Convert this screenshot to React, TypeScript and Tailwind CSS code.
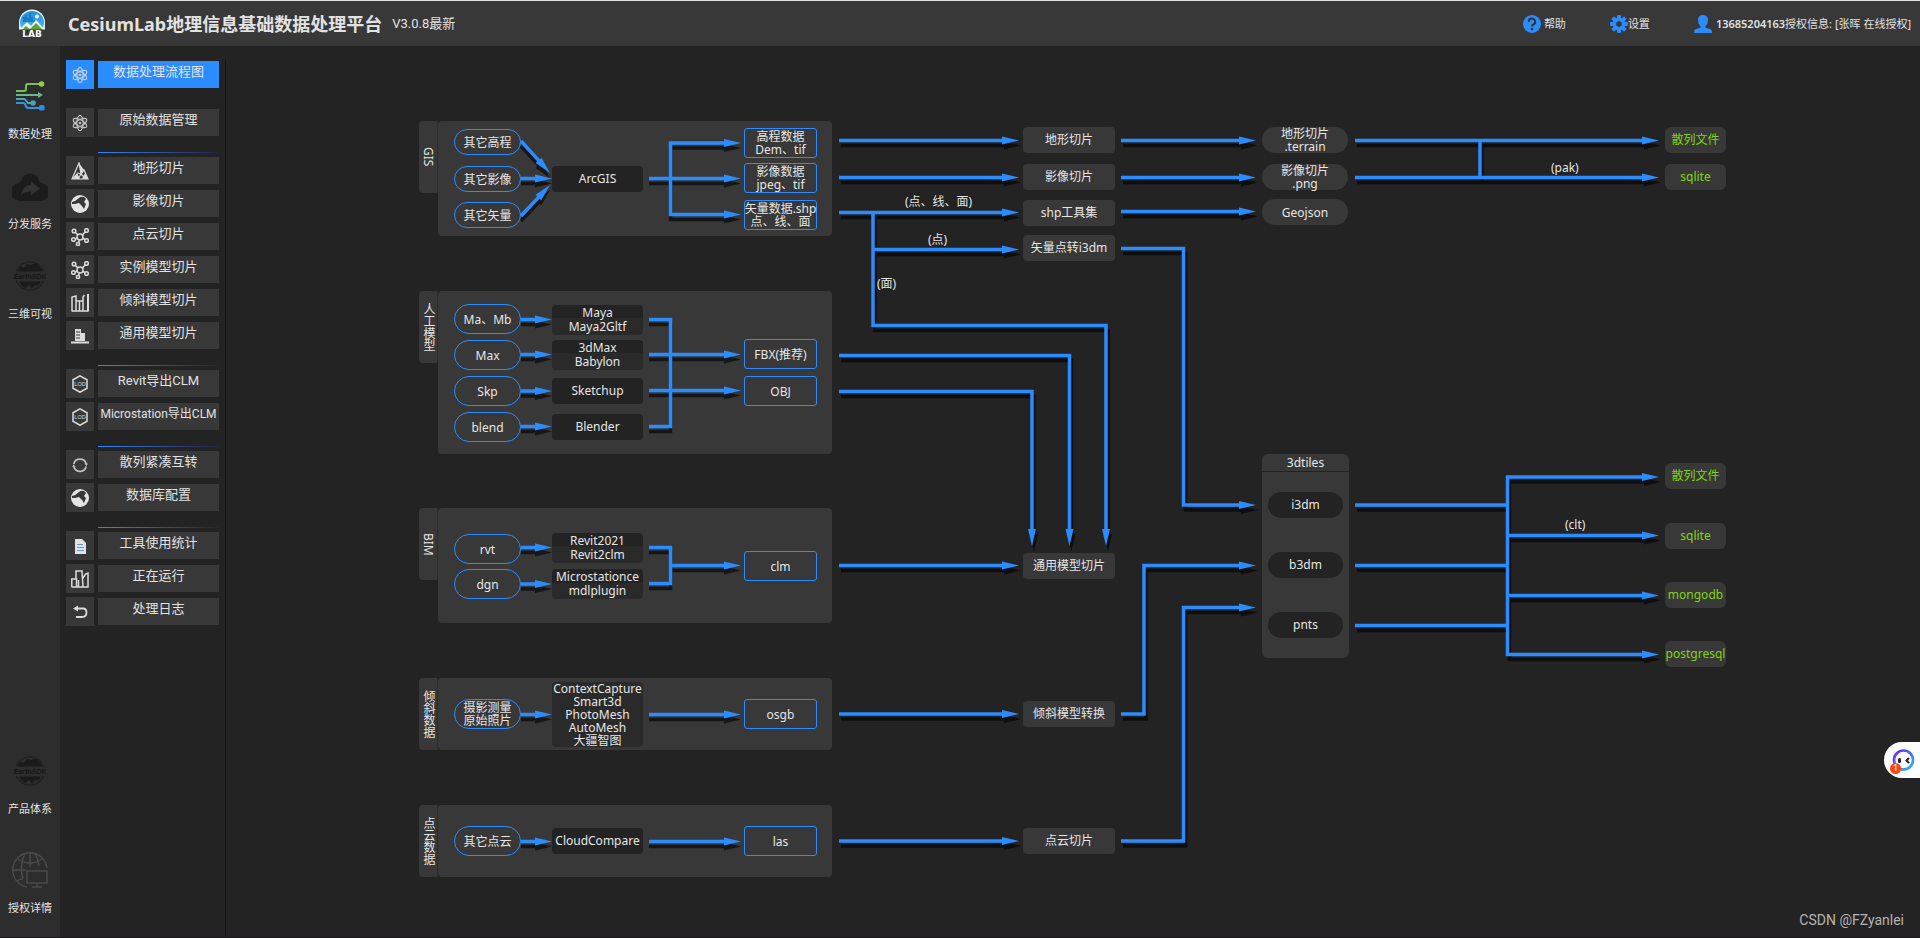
import type { ReactNode } from "react";

/* ---------- Icons ---------- */

function LogoIcon() {
  return (
    <svg viewBox="0 0 28 30" className="h-[30px] w-7" aria-hidden="true">
      <defs>
        <linearGradient id="sky" x1="0" y1="0" x2="0" y2="1">
          <stop offset="0" stopColor="#1f8fe0" />
          <stop offset="1" stopColor="#5cc4f2" />
        </linearGradient>
        <clipPath id="disc">
          <path d="M1 14A13 13 0 0 1 27 14V21H1Z" />
        </clipPath>
      </defs>
      <path d="M1 21V13.500A13 13 0 0 1 27 13.500V21Z" fill="#e9f4f8" />
      <circle cx="14" cy="14" r="12" fill="url(#sky)" clipPath="url(#disc)" />
      <path d="M5 12V8H7V6H9V9H11V4H13V8H15V11H17V13H5Z" fill="#1673b8" opacity=".8" />
      <circle cx="19" cy="7.500" r="2" fill="#fff" />
      <g clipPath="url(#disc)">
        <path d="M1 21L9 13L13 17L18 11L27 21Z" fill="#f4f9f2" />
        <path d="M2 23L8 17L12 20L18 14L27 23Z" fill="#5da336" />
      </g>
      <path d="M1 20.500H27V30H1Z" fill="#383838" />
      <text x="14" y="27.500" textAnchor="middle" fontSize="9" fontWeight="800" fontFamily="DejaVu Sans, sans-serif" fill="#fff">
        LAB
      </text>
    </svg>
  );
}

function FlowIcon() {
  return (
    <svg viewBox="0 0 30 32" className="h-8 w-[30px]" fill="none" strokeWidth="2" aria-hidden="true">
      <path d="M1 11H9Q11 11 11 9V6Q11 4 13 4H24" stroke="#79bf5c" />
      <circle cx="26.500" cy="4" r="2.800" fill="#8ed13e" />
      <path d="M1 15H24" stroke="#66b98a" />
      <path d="M23 12L28 15L23 18Z" fill="#66b98a" />
      <path d="M1 19H9Q10 19 11 20.500L13 23H16" stroke="#4aa5b5" />
      <path d="M1 23H8Q10 23 10.500 25Q11 28 14 28H25" stroke="#3a93d8" />
      <circle cx="18" cy="23" r="2.800" fill="#45a2c0" />
      <rect x="24" y="25" width="5.500" height="5.500" rx="1.500" fill="#2b8cf0" />
    </svg>
  );
}

function CloudShareIcon() {
  return (
    <svg viewBox="0 1 36 32" className="h-8 w-9" aria-hidden="true">
      <path d="M9 32A9 9 0 0 1 7 14Q8 13 9.500 11.500A9 9 0 0 1 27 11.500Q28 13 29 14A9 9 0 0 1 27 32Z" fill="#1b1b1b" />
      <path d="M9 26Q11 16 19 16V12.500L28 19.500L19 26.500V22.500Q13 22 9 26Z" fill="#333" />
    </svg>
  );
}

function EarthSdkIcon() {
  return (
    <svg viewBox="0 0 36 32" className="h-8 w-9" aria-hidden="true">
      <path d="M4.500 11A14.500 14.500 0 0 1 31.500 11M4.500 21A14.500 14.500 0 0 0 31.500 21" fill="none" stroke="#202020" strokeWidth="1.300" />
      <path d="M6 11L8 6.500L12 8L15 4L19 5L24 3L27 6L30 10V11.500H6Z" fill="#1a1a1a" />
      <path d="M7 21.500H29L26 25.500L23 25L20 29L17 25L13 28L9 25Z" fill="#1a1a1a" />
      <text x="18" y="19" textAnchor="middle" fontSize="7" fontWeight="700" fontStyle="italic" fontFamily="Liberation Sans, sans-serif" fill="#161616">
        EarthSDK
      </text>
    </svg>
  );
}

function GlobeMonitorIcon() {
  return (
    <svg viewBox="0 0 36 36" className="size-9" fill="none" stroke="#4a4a4a" strokeWidth="1.500" aria-hidden="true">
      <path d="M15 35A17.200 17.200 0 1 1 35 16" />
      <path d="M18 1V15M1 18H14M6 7Q18 15 30 7M13 1.500Q7 14 11 27M23 1.500Q26 7 27 14M5 29Q8 27 11 27" />
      <rect x="15" y="19" width="20" height="12" />
      <path d="M25 31V35M20 35H30" />
    </svg>
  );
}

function Tile({ children }: { children: ReactNode }) {
  return (
    <svg viewBox="0 0 18 18" className="size-[18px]" fill="none" stroke="#dcdcdc" strokeWidth="1.200" aria-hidden="true">
      {children}
    </svg>
  );
}

const icons = {
  atom: (
    <Tile>
      <g opacity=".85">
        <ellipse cx="9" cy="9" rx="3.200" ry="7.600" />
        <ellipse cx="9" cy="9" rx="3.200" ry="7.600" transform="rotate(60 9 9)" />
        <ellipse cx="9" cy="9" rx="3.200" ry="7.600" transform="rotate(-60 9 9)" />
        <circle cx="9" cy="9" r="1.300" fill="#dcdcdc" stroke="none" />
      </g>
    </Tile>
  ),
  terrain: (
    <Tile>
      <path d="M8 1L1 17H17L13 8L10 12Z" />
      <path d="M8 1L10 12L13 8ZM1 17L6 11L9 17ZM11 17L14 11L17 17Z" fill="#dcdcdc" stroke="none" />
      <path d="M6 11L10 12L7 17M10 12L14 16" />
    </Tile>
  ),
  globe: (
    <Tile>
      <circle cx="9" cy="9" r="9" fill="#e4e4e4" stroke="none" />
      <path d="M1 7Q5 6 8 3Q10 1 13 2L15 4L13 7L15 9L13 14L11 11L8 8L4 9L1 9Z" fill="#383838" stroke="none" />
    </Tile>
  ),
  cluster: (
    <Tile>
      <g strokeWidth="1.500">
        <circle cx="9" cy="9" r="3" />
        <circle cx="3" cy="3" r="1.800" />
        <circle cx="15.500" cy="2.500" r="1.800" />
        <circle cx="2.500" cy="11.500" r="1.800" />
        <circle cx="15.500" cy="12.500" r="1.800" />
        <circle cx="7" cy="16" r="1.600" />
        <path d="M4.500 4.500L7 7M14 4L11.500 7M4.300 11L6.500 10M11.700 10.500L14 11.500M8.500 12L7.500 14.500" />
      </g>
    </Tile>
  ),
  buildings: (
    <Tile>
      <g strokeWidth="1.500">
        <path d="M1 17V3L5 2V17M5 7H12V17M8.500 7V17M12 7V3L13.500 1M.5 17H17" />
        <path d="M17 0V17.500" strokeWidth="2" />
      </g>
    </Tile>
  ),
  tower: (
    <Tile>
      <path d="M4 2H10V6H14V14H4Z" fill="#dcdcdc" stroke="none" />
      <path d="M5 5H9M5 8H9M5 11H9" stroke="#383838" />
      <path d="M0 15.500H18" strokeWidth="2" />
    </Tile>
  ),
  lod: (
    <Tile>
      <path d="M9 .8L16 4.800V13.200L9 17.200L2 13.200V4.800Z" strokeWidth="1.500" />
      <text x="9" y="11" textAnchor="middle" fontSize="5.500" fontFamily="Liberation Sans, sans-serif" fill="#dcdcdc" stroke="none">
        LOD
      </text>
    </Tile>
  ),
  cycle: (
    <Tile>
      <path d="M2.800 8A6.400 6.400 0 0 1 15.200 8M15.200 10.500A6.400 6.400 0 0 1 2.800 10.500" strokeWidth="1.800" stroke="#bdbdbd" />
      <path d="M13.200 7.500H17L15.500 10ZM1 10.800L2.500 8.500L4.800 10.800Z" fill="#bdbdbd" stroke="none" />
    </Tile>
  ),
  doc: (
    <Tile>
      <path d="M4 2H11L15 6V17H4Z" fill="#e4e4e4" stroke="none" />
      <path d="M6 7.500H12M6 10.500H13M6 13.500H13" stroke="#5b9bea" />
    </Tile>
  ),
  city: (
    <Tile>
      <path d="M.8 17V9H5.500V17M5 9V1H11L12 17M12 8L14.500 4L17 3V17H.5M7.500 10V17" strokeWidth="1.500" />
    </Tile>
  ),
  back: (
    <Tile>
      <path d="M6 5.500H12Q15.500 5.500 15.500 9.500Q15.500 14 11 14H5" strokeWidth="1.800" />
      <path d="M7 2.500V8.500L2 5.500Z" fill="#dcdcdc" stroke="none" />
    </Tile>
  ),
};

function HelpIcon() {
  return (
    <svg viewBox="0 0 18 18" className="size-[18px]" aria-hidden="true">
      <circle cx="9" cy="9" r="9" fill="#2a8cff" />
      <path d="M5.800 7A3.200 3.200 0 1 1 10.500 9.500Q9 10.200 9 11.500" fill="none" stroke="#333" strokeWidth="2" />
      <circle cx="9" cy="14" r="1.300" fill="#333" />
    </svg>
  );
}

const teeth = [0, 45, 90, 135, 180, 225, 270, 315];

function GearIcon() {
  return (
    <svg viewBox="0 0 18 18" className="size-[18px]" aria-hidden="true">
      <circle cx="9" cy="9" r="4.600" fill="none" stroke="#2a8cff" strokeWidth="3.600" />
      {teeth.map((a) => (
        <rect key={a} x="7" y="0" width="4" height="4" rx=".8" fill="#2a8cff" transform={`rotate(${a} 9 9)`} />
      ))}
    </svg>
  );
}

function UserIcon() {
  return (
    <svg viewBox="0 0 18 18" className="size-[18px]" fill="#2a8cff" aria-hidden="true">
      <path d="M9 0Q14 0 14 5Q14 9 11.500 11V12.500L17 14.500Q18 15 18 18H0Q0 15 1 14.500L6.500 12.500V11Q4 9 4 5Q4 0 9 0Z" />
    </svg>
  );
}

/* ---------- Navigation ---------- */

function RailItem({ icon, label }: { icon: ReactNode; label: string }) {
  return (
    <a href="#" className="flex w-full flex-col items-center gap-[13px]">
      <span className="flex h-9 items-center justify-center">{icon}</span>
      <span className="text-[11px] leading-4 text-[#e4e4e4]">{label}</span>
    </a>
  );
}

type MenuEntry = { icon: keyof typeof icons; label: string; active?: boolean; long?: boolean };

const menu: { line: boolean; items: MenuEntry[] }[] = [
  { line: false, items: [{ icon: "atom", label: "数据处理流程图", active: true }] },
  { line: false, items: [{ icon: "atom", label: "原始数据管理" }] },
  {
    line: true,
    items: [
      { icon: "terrain", label: "地形切片" },
      { icon: "globe", label: "影像切片" },
      { icon: "cluster", label: "点云切片" },
      { icon: "cluster", label: "实例模型切片" },
      { icon: "buildings", label: "倾斜模型切片" },
      { icon: "tower", label: "通用模型切片" },
    ],
  },
  {
    line: true,
    items: [
      { icon: "lod", label: "Revit导出CLM" },
      { icon: "lod", label: "Microstation导出CLM", long: true },
    ],
  },
  {
    line: true,
    items: [
      { icon: "cycle", label: "散列紧凑互转" },
      { icon: "globe", label: "数据库配置" },
    ],
  },
  {
    line: true,
    items: [
      { icon: "doc", label: "工具使用统计" },
      { icon: "city", label: "正在运行" },
      { icon: "back", label: "处理日志" },
    ],
  },
];

function MenuButton({ icon, label, active, long }: MenuEntry) {
  const bg = active ? "bg-[#2a8cff]" : "bg-[#383838]";
  const size = long ? "text-[12px]" : "text-[13px]";
  return (
    <button type="button" className="flex h-[29px] w-full items-center gap-1">
      <span className={`flex h-full w-7 shrink-0 items-center justify-center ${bg}`}>{icons[icon]}</span>
      <span
        className={`flex h-[27px] min-w-0 flex-1 items-center justify-center pb-[6px] leading-4 whitespace-nowrap text-[#e2e2e2] ${size} ${bg}`}
      >
        {label}
      </span>
    </button>
  );
}

function Sidebar() {
  return (
    <nav className="flex w-[166px] shrink-0 flex-col pt-[14px] pb-px">
      <div className="flex flex-1 flex-col border-r border-[#151515] pr-[6px] pl-[6px]">
        {menu.map((group, i) => (
          <div key={i}>
            {i > 0 && (
              <div className="flex h-[19px] flex-col justify-end pb-[3px] pl-8">
                {group.line && <div className="h-px bg-gradient-to-r from-[#2a8cff] to-[#232343]" />}
              </div>
            )}
            <div className="flex flex-col gap-1">
              {group.items.map((item) => (
                <MenuButton key={item.label} {...item} />
              ))}
            </div>
          </div>
        ))}
      </div>
    </nav>
  );
}

/* ---------- Diagram ---------- */

/* The canvas shares the window's coordinate system; it starts right of the menus and under the header. */
const ORIGIN_X = 226;
const ORIGIN_Y = 46;
const CANVAS_W = 1510;
const CANVAS_H = 850;

const kinds = {
  pill: "rounded-full border border-[#2a8cff] leading-[13px]",
  tool: "rounded bg-[#232323] leading-[14px]",
  split: "rounded bg-gradient-to-b from-[#232323] from-45% to-[#2a2a2a] to-45% leading-[14px]",
  list: "rounded-sm bg-[#2a2a2a] leading-[13px]",
  output: "rounded-[3px] border border-[#2a8cff] leading-[13px]",
  step: "rounded bg-[#383838] leading-4",
  format: "rounded-full bg-[#383838] leading-[13px]",
  tile: "rounded-full bg-[#232323] leading-4",
  sink: "rounded-md bg-[#383838] leading-4 text-[#7fd60e]",
};

const widths: Record<keyof typeof kinds, { x: number; w: number }> = {
  pill: { x: 454, w: 67 },
  tool: { x: 552, w: 91 },
  split: { x: 552, w: 91 },
  list: { x: 552, w: 91 },
  output: { x: 744, w: 73 },
  step: { x: 1023, w: 92 },
  format: { x: 1262, w: 86 },
  tile: { x: 1268, w: 75 },
  sink: { x: 1665, w: 61 },
};

type NodeDef = [keyof typeof kinds, number, number, string[]];

const nodes: NodeDef[] = [
  ["pill", 129, 26, ["其它高程"]],
  ["pill", 166, 26, ["其它影像"]],
  ["pill", 202, 26, ["其它矢量"]],
  ["tool", 166, 26, ["ArcGIS"]],
  ["output", 128, 30, ["高程数据", "Dem、tif"]],
  ["output", 163, 30, ["影像数据", "jpeg、tif"]],
  ["output", 200, 30, ["矢量数据.shp", "点、线、面"]],

  ["pill", 304, 30, ["Ma、Mb"]],
  ["pill", 340, 30, ["Max"]],
  ["pill", 376, 30, ["Skp"]],
  ["pill", 412, 30, ["blend"]],
  ["split", 305, 30, ["Maya", "Maya2Gltf"]],
  ["split", 340, 30, ["3dMax", "Babylon"]],
  ["tool", 378, 26, ["Sketchup"]],
  ["tool", 414, 26, ["Blender"]],
  ["output", 339, 30, ["FBX(推荐)"]],
  ["output", 376, 30, ["OBJ"]],

  ["pill", 534, 30, ["rvt"]],
  ["pill", 569, 30, ["dgn"]],
  ["split", 533, 30, ["Revit2021", "Revit2clm"]],
  ["split", 569, 30, ["Microstationce", "mdlplugin"]],
  ["output", 551, 30, ["clm"]],

  ["pill", 699, 30, ["摄影测量", "原始照片"]],
  ["list", 682, 65, ["ContextCapture", "Smart3d", "PhotoMesh", "AutoMesh", "大疆智图"]],
  ["output", 699, 30, ["osgb"]],

  ["pill", 826, 30, ["其它点云"]],
  ["tool", 828, 26, ["CloudCompare"]],
  ["output", 826, 30, ["las"]],

  ["step", 127, 26, ["地形切片"]],
  ["step", 164, 26, ["影像切片"]],
  ["step", 200, 26, ["shp工具集"]],
  ["step", 235, 26, ["矢量点转i3dm"]],
  ["step", 553, 26, ["通用模型切片"]],
  ["step", 701, 26, ["倾斜模型转换"]],
  ["step", 828, 26, ["点云切片"]],

  ["format", 127, 26, ["地形切片", ".terrain"]],
  ["format", 164, 26, ["影像切片", ".png"]],
  ["format", 199, 26, ["Geojson"]],

  ["tile", 492, 26, ["i3dm"]],
  ["tile", 552, 26, ["b3dm"]],
  ["tile", 612, 26, ["pnts"]],

  ["sink", 127, 26, ["散列文件"]],
  ["sink", 164, 26, ["sqlite"]],
  ["sink", 463, 26, ["散列文件"]],
  ["sink", 523, 26, ["sqlite"]],
  ["sink", 582, 26, ["mongodb"]],
  ["sink", 641, 26, ["postgresql"]],
];

const groups = [
  { title: "GIS", y: 121, h: 115 },
  { title: "人工模型", y: 291, h: 163 },
  { title: "BIM", y: 508, h: 115 },
  { title: "倾斜数据", y: 678, h: 72 },
  { title: "点云数据", y: 805, h: 72 },
];

const notes = [
  { text: "(点、线、面)", x: 905, y: 194 },
  { text: "(点)", x: 928, y: 232 },
  { text: "(面)", x: 877, y: 276 },
  { text: "(pak)", x: 1551, y: 160 },
  { text: "(clt)", x: 1565, y: 517 },
];

type Link = { pts: [number, number][]; arrow?: boolean };

const innerLinks: Link[] = [
  { pts: [[521, 141], [550, 173]], arrow: true },
  { pts: [[521, 216], [550, 185]], arrow: true },
  ...[178.5, 319.5, 354.5, 391, 426.5, 547.5, 584, 714.5, 841.5].map(
    (y): Link => ({ pts: [[521, y], [552, y]], arrow: true }),
  ),
  { pts: [[670.5, 178.5], [670.5, 143], [741, 143]], arrow: true },
  { pts: [[670.5, 178.5], [670.5, 214.5], [741, 214.5]], arrow: true },
  { pts: [[649, 178.5], [741, 178.5]], arrow: true },
  { pts: [[649, 319.5], [670.5, 319.5], [670.5, 426.5], [649, 426.5]] },
  { pts: [[649, 354.5], [741, 354.5]], arrow: true },
  { pts: [[649, 390.5], [741, 390.5]], arrow: true },
  { pts: [[649, 547.5], [670.5, 547.5], [670.5, 583.5], [649, 583.5]] },
  { pts: [[670.5, 565.5], [741, 565.5]], arrow: true },
  { pts: [[649, 714.5], [741, 714.5]], arrow: true },
  { pts: [[649, 841.5], [741, 841.5]], arrow: true },
];

const outerLinks: Link[] = [
  ...[140.5, 177.5, 212.5, 565.5, 714, 841].map((y): Link => ({ pts: [[839, y], [1019, y]], arrow: true })),
  ...[140.5, 177.5, 211.5].map((y): Link => ({ pts: [[1121, y], [1256, y]], arrow: true })),
  { pts: [[873, 212.5], [873, 325.5], [1106, 325.5], [1106, 546]], arrow: true },
  { pts: [[873, 249.5], [1019, 249.5]], arrow: true },
  { pts: [[839, 355.5], [1069.5, 355.5], [1069.5, 546]], arrow: true },
  { pts: [[839, 391.5], [1032, 391.5], [1032, 546]], arrow: true },
  { pts: [[1121, 248.5], [1183.5, 248.5], [1183.5, 505], [1256, 505]], arrow: true },
  { pts: [[1121, 714], [1144, 714], [1144, 565.5], [1256, 565.5]], arrow: true },
  { pts: [[1121, 841], [1183.5, 841], [1183.5, 607.5], [1256, 607.5]], arrow: true },
  { pts: [[1355, 140.5], [1659, 140.5]], arrow: true },
  { pts: [[1355, 177.5], [1659, 177.5]], arrow: true },
  { pts: [[1480, 140.5], [1480, 177.5]] },
  ...[505, 565.5, 625.5].map((y): Link => ({ pts: [[1355, y], [1507.5, y]] })),
  { pts: [[1507.5, 565.5], [1507.5, 477], [1659, 477]], arrow: true },
  { pts: [[1507.5, 535.5], [1659, 535.5]], arrow: true },
  { pts: [[1507.5, 595.5], [1659, 595.5]], arrow: true },
  { pts: [[1507.5, 565.5], [1507.5, 654.5], [1659, 654.5]], arrow: true },
];

const HEAD = 16;

function LinkShape({ link, color }: { link: Link; color: string }) {
  const pts = link.pts.map(([x, y]) => [x, y]);
  const [tx, ty] = pts[pts.length - 1];
  const [px, py] = pts[pts.length - 2];
  const angle = Math.atan2(ty - py, tx - px);
  if (link.arrow) {
    pts[pts.length - 1] = [tx - HEAD * Math.cos(angle), ty - HEAD * Math.sin(angle)];
  }
  return (
    <g>
      <polyline points={pts.map((p) => p.join(",")).join(" ")} fill="none" stroke={color} strokeWidth="3.500" />
      {link.arrow && (
        <path
          d={`M0 0L${-HEAD - 1} -4V4Z`}
          fill={color}
          transform={`translate(${tx} ${ty}) rotate(${(angle * 180) / Math.PI})`}
        />
      )}
    </g>
  );
}

function Links({ links, dx, shade }: { links: Link[]; dx: number; shade: string }) {
  return (
    <>
      <g transform={`translate(${dx} 5)`}>
        {links.map((l, i) => (
          <LinkShape key={i} link={l} color={shade} />
        ))}
      </g>
      {links.map((l, i) => (
        <LinkShape key={i} link={l} color="#2a8cff" />
      ))}
    </>
  );
}

function at(x: number, y: number, w?: number, h?: number) {
  return { left: x - ORIGIN_X, top: y - ORIGIN_Y, width: w, height: h };
}

function Diagram() {
  return (
    <div
      className="relative font-['Noto_Sans','Noto_Sans_CJK_SC',sans-serif] text-xs text-[#e6e6e6]"
      style={{ width: CANVAS_W, height: CANVAS_H }}
    >
      {groups.map((g) => (
        <section key={g.title}>
          <div className="absolute rounded-sm bg-[#383838]" style={at(438, g.y, 394, g.h)} />
          <h2
            className="absolute flex items-center justify-center rounded-l-sm border-r border-[#2c2c2c] bg-[#383838] leading-4 [writing-mode:vertical-rl]"
            style={at(419, g.y, 19, 72)}
          >
            {g.title}
          </h2>
        </section>
      ))}

      <section className="absolute rounded-md bg-[#383838]" style={at(1262, 454, 87, 204)}>
        <h2 className="h-[18px] border-b border-[#232323] text-center leading-[17px]">3dtiles</h2>
      </section>

      <svg
        className="absolute inset-0"
        width={CANVAS_W}
        height={CANVAS_H}
        viewBox={`${ORIGIN_X} ${ORIGIN_Y} ${CANVAS_W} ${CANVAS_H}`}
        aria-hidden="true"
      >
        <Links links={innerLinks} dx={0} shade="#161616" />
        <Links links={outerLinks} dx={2} shade="#0e0e0e" />
      </svg>

      {nodes.map(([kind, y, h, lines], i) => (
        <div
          key={i}
          className={`absolute flex flex-col items-center justify-center text-center whitespace-nowrap ${kinds[kind]}`}
          style={at(widths[kind].x, y, widths[kind].w, h)}
        >
          {lines.map((line) => (
            <span key={line}>{line}</span>
          ))}
        </div>
      ))}

      {notes.map((n) => (
        <span key={n.text} className="absolute leading-4 whitespace-nowrap" style={at(n.x, n.y)}>
          {n.text}
        </span>
      ))}
    </div>
  );
}

/* ---------- Page ---------- */

function Header() {
  return (
    <header className="flex h-[46px] shrink-0 items-center border-t border-[#dfe3e2] bg-[#383838] pr-[9px] pl-[18px] text-[#e2e2e2]">
      <LogoIcon />
      <h1 className="ml-[22px] font-['Noto_Sans','Noto_Sans_CJK_SC',sans-serif] text-lg leading-6 font-bold whitespace-nowrap">
        CesiumLab地理信息基础数据处理平台
      </h1>
      <span className="ml-[10px] text-[13px] leading-5 whitespace-nowrap">V3.0.8最新</span>
      <div className="ml-auto flex items-center gap-11 font-['Noto_Sans','Noto_Sans_CJK_SC',sans-serif] text-[11px] leading-4 whitespace-nowrap">
        <button type="button" className="flex items-center gap-[3px]">
          <HelpIcon />
          帮助
        </button>
        <button type="button" className="flex items-center">
          <GearIcon />
          设置
        </button>
        <button type="button" className="flex items-center gap-1">
          <UserIcon />
          <span>
            <span className="font-semibold">13685204163</span>授权信息: [张晖 在线授权]
          </span>
        </button>
      </div>
    </header>
  );
}

export default function App() {
  return (
    <div className="flex min-h-screen flex-col border-b border-[#1a171b] bg-[#232323] font-['Roboto','Noto_Sans_CJK_SC',sans-serif]">
      <Header />
      <div className="flex flex-1">
        <aside className="flex w-[60px] shrink-0 flex-col justify-between bg-[#2d2d2d] pt-8 pb-5">
          <div className="flex flex-col gap-[25px]">
            <RailItem icon={<FlowIcon />} label="数据处理" />
            <RailItem icon={<CloudShareIcon />} label="分发服务" />
            <RailItem icon={<EarthSdkIcon />} label="三维可视" />
          </div>
          <div className="flex flex-col gap-[34px]">
            <RailItem icon={<EarthSdkIcon />} label="产品体系" />
            <RailItem icon={<GlobeMonitorIcon />} label="授权详情" />
          </div>
        </aside>
        <Sidebar />
        <main className="relative min-w-0 flex-1">
          <Diagram />
          <p className="absolute right-4 bottom-[7px] text-sm leading-5 text-[#b4b4b4]">CSDN @FZyanlei</p>
        </main>
      </div>
      <button
        type="button"
        aria-label="助手"
        className="fixed right-0 bottom-40 flex h-9 w-9 items-center justify-end rounded-l-full bg-white pr-[5px]"
      >
        <svg viewBox="0 0 24 24" className="size-6" aria-hidden="true">
          <defs>
            <linearGradient id="ring" x1="0" y1="0" x2="1" y2="1">
              <stop offset="0" stopColor="#6a2cf5" />
              <stop offset=".5" stopColor="#4a63f5" />
              <stop offset="1" stopColor="#25c4ee" />
            </linearGradient>
          </defs>
          <circle cx="12.500" cy="12" r="9.500" fill="none" stroke="url(#ring)" strokeWidth="2.600" />
          <rect x="7" y="10" width="3" height="5" rx="1.500" fill="#222" />
          <path d="M18 10L15.500 12.500L18 15" fill="none" stroke="#222" strokeWidth="2" />
        </svg>
        <span className="absolute bottom-1 left-[6px] flex h-[11px] w-[11px] items-center justify-center rounded-full bg-[#fa4a14] text-[9px] leading-none text-white">
          1
        </span>
      </button>
    </div>
  );
}
